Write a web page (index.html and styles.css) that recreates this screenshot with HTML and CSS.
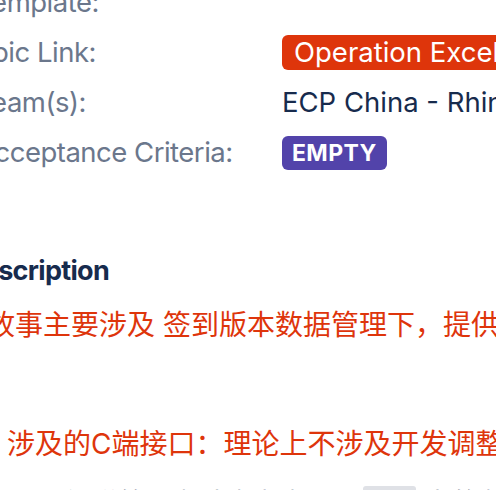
FILE: index.html
```html
<!DOCTYPE html>
<html lang="zh">
<head>
<meta charset="utf-8">
<link rel="stylesheet" href="styles.css">
</head>
<body>
<div class="page">
  <div class="fields">
    <div class="label">Template:</div>
    <div class="value"></div>
    <div class="label">Epic Link:</div>
    <div class="value"><span class="epic">Operation Excellence</span></div>
    <div class="label">Team(s):</div>
    <div class="value">ECP China - Rhino</div>
    <div class="label">Acceptance Criteria:</div>
    <div class="value"><span class="lozenge">EMPTY</span></div>
  </div>
  <section class="desc">
    <h2 class="desc-title">Description</h2>
    <p class="red first">故事主要涉及 签到版本数据管理下，提供给运营人员使用</p>
    <p class="blank">&nbsp;</p>
    <p class="red item">涉及的C端接口：理论上不涉及开发调整。</p>
    <p class="dark item">需要新增签到版本数据接口 <code class="code">sign</code> 中的版本数据管理</p>
  </section>
</div>
</body>
</html>
```
FILE: styles.css
```css
html, body {
  margin: 0;
  padding: 0;
  background: #ffffff;
  overflow: hidden;
}
body {
  width: 496px;
  height: 490px;
  font-family: Inter, "Noto Sans CJK SC", sans-serif;
  color: #172B4D;
}
.page {
  margin-top: -23px;
  white-space: nowrap;
}
.fields {
  display: grid;
  grid-template-columns: 306px 1fr;
  grid-auto-rows: 50px;
  align-items: center;
  margin-left: -24px;
  font-size: 27.5px;
}
.label {
  color: #6B778C;
  letter-spacing: -0.5px;
}
.value {
  color: #172B4D;
  letter-spacing: 0;
}
.epic {
  display: inline-block;
  background: #DE350B;
  color: #ffffff;
  border-radius: 6px;
  padding: 0 12px;
  line-height: 35px;
  height: 35px;
}
.lozenge {
  display: inline-block;
  background: #5243AA;
  color: #ffffff;
  border-radius: 6px;
  padding: 0 10px;
  font-size: 23px;
  font-weight: 700;
  line-height: 34px;
  height: 34px;
  letter-spacing: 0.4px;
}
.desc {
  margin-top: 76px;
}
.desc-title {
  margin: 0 0 0 -36px;
  font-size: 27px;
  font-weight: 700;
  letter-spacing: -0.7px;
  line-height: 36px;
  color: #172B4D;
}
.desc p {
  margin: 0;
  font-size: 28px;
  line-height: 59.5px;
}
.desc .first {
  margin-left: -13px;
  margin-top: 7px;
}
.desc .item {
  margin-left: 7px;
}
.red {
  color: #DE350B;
}
.dark {
  color: #172B4D;
}
.code {
  font-family: "Liberation Mono", monospace;
  background: #DFE1E6;
  color: #172B4D;
  font-size: 22px;
  line-height: 1;
  margin-left: 12px;
  padding: 10px 0;
  border-radius: 3px;
}
```
